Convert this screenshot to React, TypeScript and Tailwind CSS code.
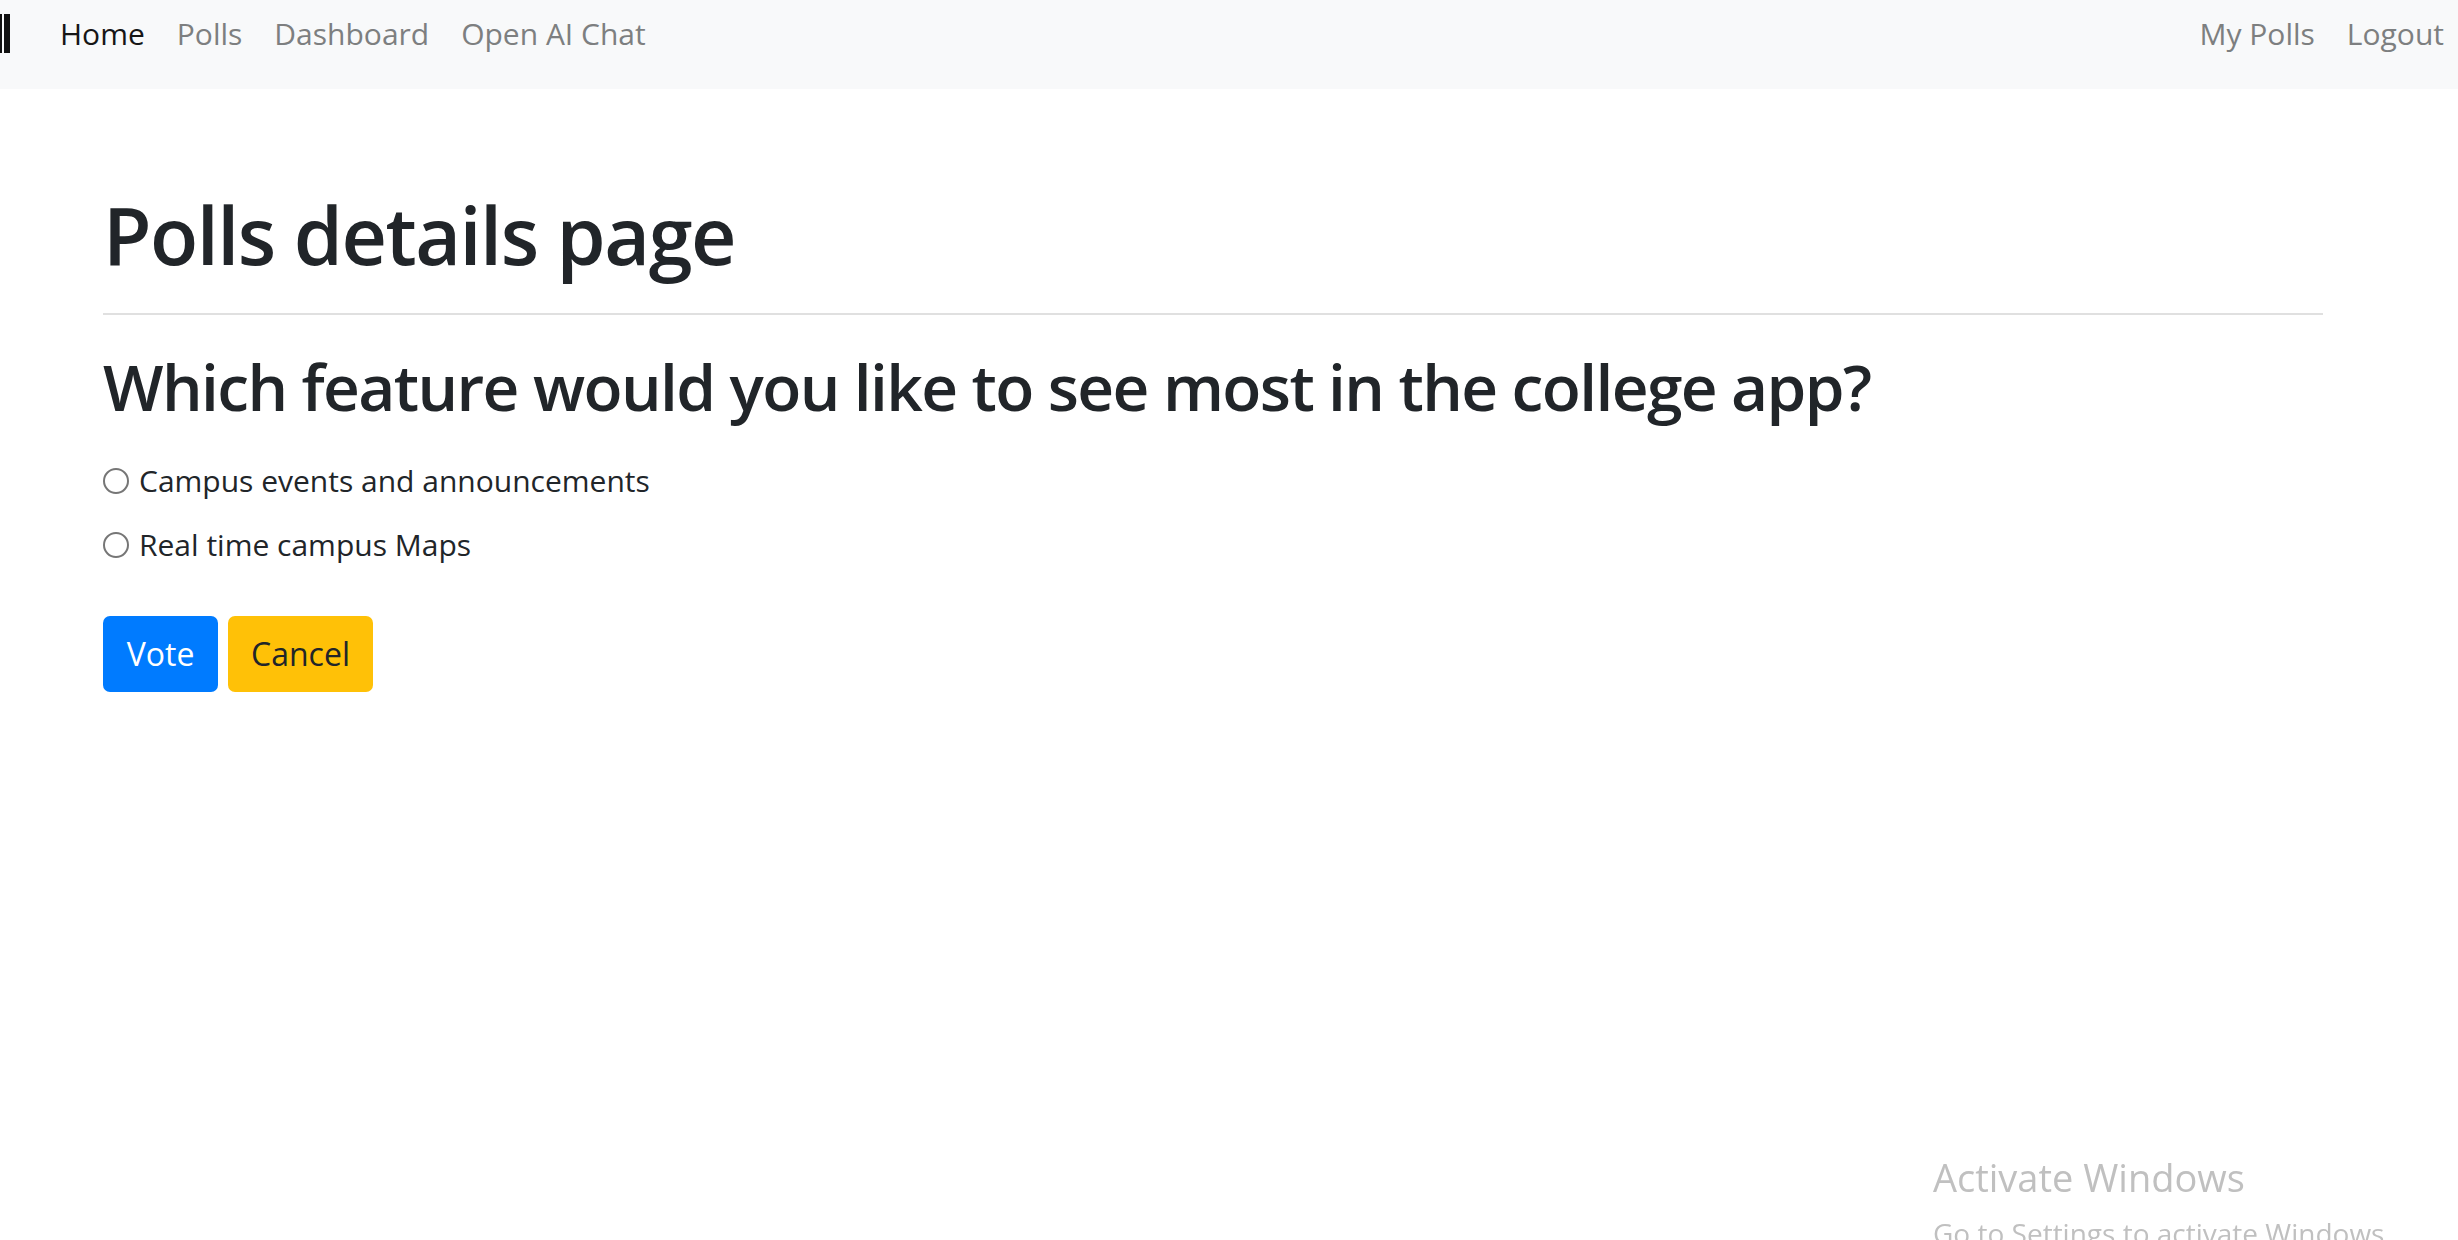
import { useState } from "react";

const options = ["Campus events and announcements", "Real time campus Maps"];

function NavLink({ label, active }: { label: string; active?: boolean }) {
  return (
    <a
      href="#"
      className={
        active
          ? "px-[16px] text-[30px] leading-[46px] text-[#161616]"
          : "px-[16px] text-[30px] leading-[46px] text-[#7d7f80]"
      }
    >
      {label}
    </a>
  );
}

export default function App() {
  const [choice, setChoice] = useState<string | null>(null);

  return (
    <div
      className="min-h-[1240px] bg-white text-[#212529]"
      style={{ fontFamily: '"Open Sans", "Noto Sans", sans-serif' }}
    >
      <nav className="flex h-[89px] items-start justify-between bg-[#f8f9fa] pt-[11px]">
        <div className="flex items-start">
          <div className="mt-[3px] flex h-[39px] items-stretch gap-[2px]">
            <span className="w-[2px] bg-[#111]" />
            <span className="w-[6px] bg-[#111]" />
          </div>
          <div className="ml-[34px] flex">
            <NavLink label="Home" active />
            <NavLink label="Polls" />
            <NavLink label="Dashboard" />
            <NavLink label="Open AI Chat" />
          </div>
        </div>
        <div className="-mr-[2px] flex">
          <NavLink label="My Polls" />
          <NavLink label="Logout" />
        </div>
      </nav>

      <main className="pl-[103px] pr-[135px]">
        <h1 className="mt-[99px] text-[79px] font-semibold leading-[1.2] tracking-[-1.5px]">
          Polls details page
        </h1>
        <hr className="mt-[30px] border-t-2 border-[#e0e0e0]" />
        <h2 className="mt-[34px] text-[64px] font-semibold leading-[1.2] tracking-[-1.6px]">
          Which feature would you like to see most in the college app?
        </h2>

        <form className="mt-[33px]" onSubmit={(e) => e.preventDefault()}>
          <div className="flex flex-col gap-[20px]">
            {options.map((opt) => (
              <label key={opt} className="flex items-center gap-[10px] text-[30px] leading-[44px]">
                <input
                  type="radio"
                  name="choice"
                  checked={choice === opt}
                  onChange={() => setChoice(opt)}
                  className="h-[26px] w-[26px] appearance-none rounded-full border-2 border-[#767676] bg-white checked:border-[7px] checked:border-[#0075ff]"
                />
                {opt}
              </label>
            ))}
          </div>

          <div className="mt-[49px] flex gap-[10px]">
            <button
              type="submit"
              className="h-[76px] w-[115px] rounded-[7px] bg-[#007bff] text-[32px] text-white"
            >
              Vote
            </button>
            <button
              type="button"
              className="h-[76px] w-[145px] rounded-[7px] bg-[#ffc107] text-[32px] text-[#212529]"
            >
              Cancel
            </button>
          </div>
        </form>
      </main>

      <div className="pointer-events-none fixed left-[1933px] top-[1155px] text-[#c0c0c0]">
        <div className="text-[38px] leading-[44px]">Activate Windows</div>
        <div className="mt-[17px] text-[28px] leading-[34px]">Go to Settings to activate Windows.</div>
      </div>
    </div>
  );
}
